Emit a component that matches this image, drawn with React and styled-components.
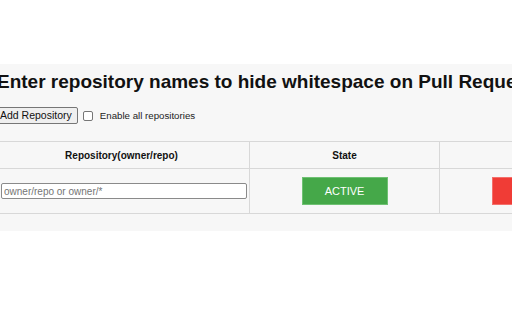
import React from 'react'
import styled, { createGlobalStyle } from 'styled-components'

const GlobalStyle = createGlobalStyle`
    html, body {
        margin: 0;
        padding: 0;
        background: #ffffff;
        font-family: "Liberation Sans", Arial, sans-serif;
        overflow: hidden;
    }
`

const App = () => {
    return (
        <>
            <GlobalStyle />
            <Page>
                <Panel>
                    <Content>
                        <Heading>Enter repository names to hide whitespace on Pull Requests</Heading>
                        <Toolbar>
                            <AddButton type="button">Add Repository</AddButton>
                            <CheckLabel>
                                <CheckBox type="checkbox" />
                                Enable all repositories
                            </CheckLabel>
                        </Toolbar>
                        <Table>
                            <colgroup>
                                <col style={{ width: 256 }} />
                                <col style={{ width: 190 }} />
                                <col style={{ width: 190 }} />
                            </colgroup>
                            <thead>
                                <tr>
                                    <HeadCell>Repository(owner/repo)</HeadCell>
                                    <HeadCell>State</HeadCell>
                                    <HeadCell>Delete</HeadCell>
                                </tr>
                            </thead>
                            <tbody>
                                <tr>
                                    <InputCell>
                                        <RepoInput placeholder="owner/repo or owner/*" />
                                    </InputCell>
                                    <Cell>
                                        <StateButton $color="#45a849" $edge="#6fc173">ACTIVE</StateButton>
                                    </Cell>
                                    <Cell>
                                        <StateButton $color="#f03c36" $edge="#f46f6a">DELETE</StateButton>
                                    </Cell>
                                </tr>
                            </tbody>
                        </Table>
                    </Content>
                </Panel>
            </Page>
        </>
    )
}

export default App

const Page = styled.div`
    width: 512px;
    height: 320px;
    padding-top: 64px;
    box-sizing: border-box;
    overflow: hidden;
`

const Panel = styled.div`
    background: #f7f7f7;
    height: 167px;
    overflow: hidden;
`

const Content = styled.div`
    margin-left: -7px;
    width: 700px;
    padding-top: 7px;
`

const Heading = styled.h2`
    margin: 0 0 0 4px;
    font-size: 19px;
    font-weight: bold;
    color: #111;
    white-space: nowrap;
    line-height: 22px;
`

const Toolbar = styled.div`
    display: flex;
    align-items: center;
    margin-top: 14px;
    height: 17px;
`

const AddButton = styled.button`
    font-family: "Liberation Sans", Arial, sans-serif;
    font-size: 10.5px;
    line-height: 13px;
    padding: 1px 5px;
    border: 1px solid #767676;
    border-radius: 2px;
    background: #efefef;
    color: #111;
    margin: 0 0 0 1px;
`

const CheckLabel = styled.label`
    display: flex;
    align-items: center;
    margin-left: 5px;
    font-size: 9.7px;
    color: #222;
`

const CheckBox = styled.input`
    appearance: none;
    width: 10px;
    height: 10px;
    margin: 0 7px 0 0;
    border: 1px solid #767676;
    border-radius: 2px;
    background: #fff;
    box-sizing: border-box;
`

const Table = styled.table`
    margin-top: 17px;
    border-collapse: collapse;
    table-layout: fixed;
    width: 636px;
    font-size: 10px;
`

const HeadCell = styled.th`
    height: 26px;
    padding: 0;
    border: 1px solid #d8d8d8;
    font-weight: bold;
    color: #111;
    text-align: center;
    vertical-align: middle;
`

const Cell = styled.td`
    height: 44px;
    padding: 0;
    border: 1px solid #d8d8d8;
    text-align: center;
    vertical-align: middle;
`

const InputCell = styled(Cell)`
    padding: 0 2px 0 7px;
    text-align: left;
`

const RepoInput = styled.input`
    display: block;
    width: 100%;
    height: 16px;
    box-sizing: border-box;
    padding: 0 2px;
    font-family: "Liberation Sans", Arial, sans-serif;
    font-size: 10px;
    border: 1px solid #8a8a8a;
    border-radius: 2px;
    background: #fff;

    &::placeholder {
        color: #757575;
    }
`

const StateButton = styled.button`
    width: 86px;
    height: 28px;
    border: 1px solid ${props => props.$edge};
    background: ${props => props.$color};
    color: #fff;
    font-family: "Liberation Sans", Arial, sans-serif;
    font-size: 11px;
    padding: 0;
    margin: 0;
`
